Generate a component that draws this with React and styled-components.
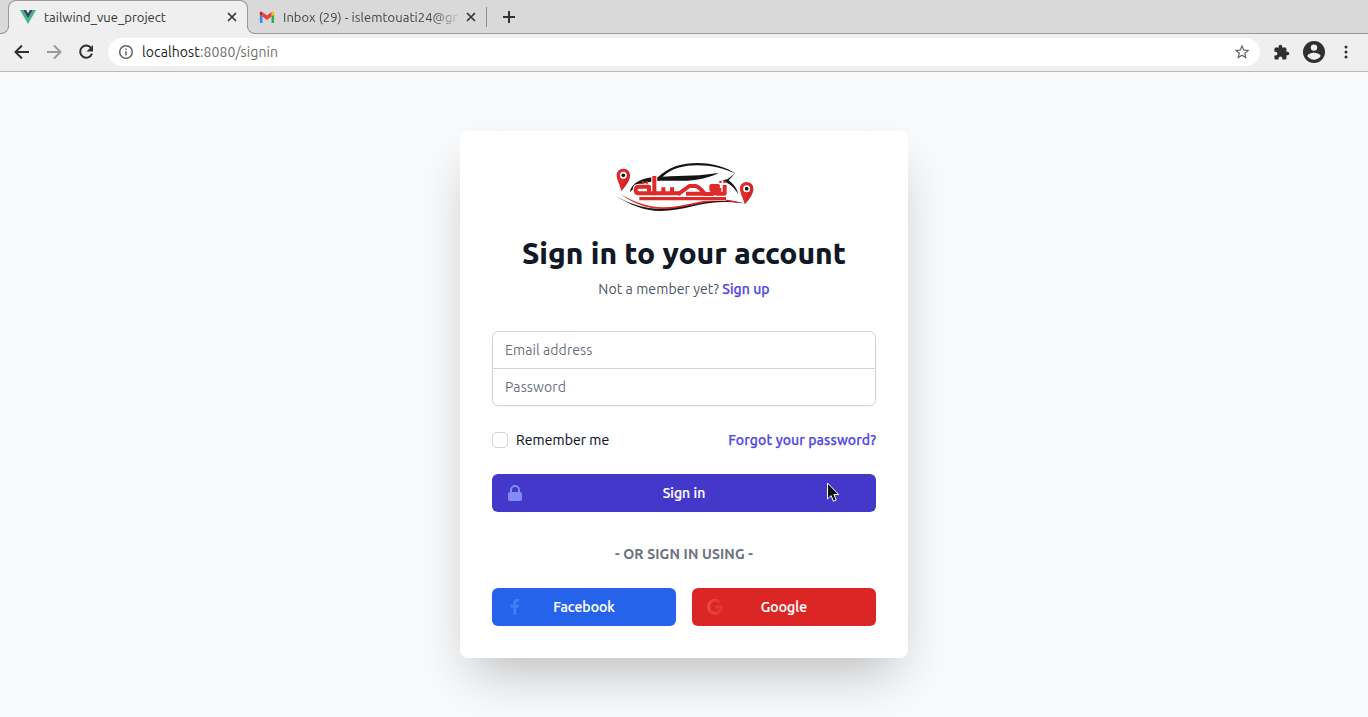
import React from "react";
import styled, { createGlobalStyle } from "styled-components";

const GlobalStyle = createGlobalStyle`
  *, *::before, *::after { box-sizing: border-box; }
  html, body { margin: 0; height: 100%; }
  body {
    font-family: Ubuntu, "Noto Sans", sans-serif;
    font-size: 14px;
    line-height: 20px;
    color: #111827;
    background: #f9fafb;
    overflow: hidden;
  }
  button, input { font: inherit; letter-spacing: inherit; margin: 0; }
  svg { display: block; flex: none; }
`;

const Window = styled.div`
  height: 717px;
  display: flex;
  flex-direction: column;
`;

const TabStrip = styled.div`
  height: 34px;
  flex: none;
  display: flex;
  background: #d9d9d9;
  border-bottom: 1px solid #999;
  padding-left: 8px;
`;

const Tab = styled.div`
  position: relative;
  display: flex;
  align-items: center;
  width: 240px;
  height: 34px;
  padding: ${(p) => (p.$active ? "0 7px 2px 11px" : "0 9px 0 11px")};
  font-size: 13px;
  color: ${(p) => (p.$active ? "#333" : "#444")};
  ${(p) =>
    p.$active &&
    `
    background: #efefef;
    border: 1px solid #999;
    border-bottom: 0;
    border-radius: 8px 8px 0 0;
    &::before, &::after {
      content: "";
      position: absolute;
      z-index: 1;
      bottom: 0;
      width: 9px;
      height: 9px;
      border-bottom: 1px solid #999;
      background: #d9d9d9;
    }
    &::before {
      left: -9px;
      border-right: 1px solid #999;
      border-bottom-right-radius: 8px;
    }
    &::after {
      right: -9px;
      border-left: 1px solid #999;
      border-bottom-left-radius: 8px;
    }
  `}
`;

const CornerFill = styled.span`
  position: absolute;
  bottom: 0;
  ${(p) => p.$side}: -6px;
  width: 8px;
  height: 6px;
  background: #efefef;
`;

const TabTitle = styled.span`
  flex: 1;
  min-width: 0;
  margin: 0 6px 0 8px;
  white-space: nowrap;
  letter-spacing: ${(p) => p.$track || 0}px;
  ${(p) => p.$fade && "mask-image: linear-gradient(to right, #000 84%, rgba(0, 0, 0, 0.2) 100%);"}
`;

const TabDivider = styled.div`
  width: 1px;
  height: 20px;
  margin: 7px 16px 0 -2px;
  background: #8c8c8c;
`;

const NewTab = styled.div`
  padding-top: 11px;
`;

const Toolbar = styled.div`
  height: 38px;
  flex: none;
  display: flex;
  align-items: center;
  padding: 0 14px 1px 13px;
  background: #efefef;
  border-bottom: 1px solid #b8b8b8;
`;

const NavButtons = styled.div`
  display: flex;
  gap: 14px;
  margin-right: 13px;
`;

const AddressBar = styled.div`
  flex: 1;
  height: 28px;
  display: flex;
  align-items: center;
  padding: 0 9px 0 10px;
  border-radius: 14px;
  background: #fff;
`;

const Url = styled.span`
  flex: 1;
  margin-left: 8px;
  color: #6c6c6c;
  letter-spacing: ${(p) => p.$track}px;
  b { font-weight: 400; color: #222; }
`;

const ToolbarActions = styled.div`
  display: flex;
  align-items: center;
  margin-left: 13px;
  gap: 13px;
`;

const Page = styled.main`
  position: relative;
  flex: 1;
  display: flex;
  justify-content: center;
  align-items: flex-start;
  padding-top: 59px;
`;

const Card = styled.section`
  width: 448px;
  height: 527px;
  padding: 32px;
  display: flex;
  flex-direction: column;
  background: #fff;
  border-radius: 8px;
  box-shadow: 0 25px 50px -12px rgba(0, 0, 0, 0.25);
`;

const LogoRow = styled.div`
  display: flex;
  justify-content: center;
`;

const Title = styled.h1`
  margin: 24px 0 0;
  font-size: 30px;
  line-height: 36px;
  font-weight: 800;
  text-align: center;
  white-space: nowrap;
`;

const Subtitle = styled.p`
  margin: 8px 0 0;
  text-align: center;
  color: #4b5563;
  letter-spacing: ${(p) => p.$track}px;
`;

const Link = styled.a`
  color: #4f46e5;
  font-weight: 500;
  -webkit-text-stroke: 0.25px currentColor;
  letter-spacing: ${(p) => p.$track}px;
`;

const Fields = styled.div`
  margin-top: 32px;
  border-radius: 6px;
  box-shadow: 0 1px 2px rgba(0, 0, 0, 0.05);
`;

const Field = styled.input`
  display: block;
  width: 100%;
  height: 38px;
  padding: 8px 12px;
  border: 1px solid #d1d5db;
  border-radius: ${(p) => (p.$last ? "0 0 6px 6px" : "6px 6px 0 0")};
  margin-top: ${(p) => (p.$last ? "-1px" : "0")};
  background: #fff;
  outline: 0;
  letter-spacing: ${(p) => p.$track}px;
  &::placeholder { color: #6b7280; opacity: 1; }
`;

const Options = styled.div`
  display: flex;
  align-items: center;
  justify-content: space-between;
  height: 20px;
  margin-top: 24px;
`;

const Remember = styled.label`
  display: flex;
  align-items: center;
  gap: 8px;
  -webkit-text-stroke: 0.15px currentColor;
  letter-spacing: ${(p) => p.$track}px;
`;

const Checkbox = styled.input`
  appearance: none;
  width: 16px;
  height: 16px;
  border: 1px solid #d1d5db;
  border-radius: 4px;
  background: #fff;
`;

const Button = styled.button`
  position: relative;
  flex: 1;
  height: 38px;
  border: 0;
  border-radius: 6px;
  color: #fff;
  font-weight: 500;
  -webkit-text-stroke: 0.2px currentColor;
  background: ${(p) => p.$color};
  letter-spacing: 0.05px;
`;

const ButtonIcon = styled.span`
  position: absolute;
  left: 13px;
  top: 9px;
  color: ${(p) => p.$color};
`;

const SubmitRow = styled.div`
  display: flex;
  margin-top: 24px;
`;

const Divider = styled.p`
  margin: 32px 0 24px;
  text-align: center;
  font-weight: 700;
  color: #6b7280;
  letter-spacing: ${(p) => p.$track}px;
`;

const Socials = styled.div`
  display: flex;
  gap: 16px;
`;

const Pointer = styled.svg`
  position: absolute;
  left: 826px;
  top: 410px;
`;

const CloseIcon = () => (
  <svg width="16" height="16" viewBox="0 0 16 16" stroke="#333" strokeWidth="1.7">
    <path d="M4 4l8 8M12 4l-8 8" />
  </svg>
);

const VueIcon = () => (
  <svg width="16" height="16" viewBox="0 0 16 16">
    <path d="M0 1h3.2L8 9.4 12.8 1H16L8 15z" fill="#41b883" />
    <path d="M3.2 1h3L8 4.2 9.8 1h3L8 9.4z" fill="#35495e" />
  </svg>
);

const GmailIcon = () => (
  <svg width="16" height="16" viewBox="0 0 16 16">
    <path d="M1 14h2.5V7.6L.8 5.5v7.3c0 .8.3 1.2 1 1.2z" fill="#4285f4" />
    <path d="M12.5 14H14c.7 0 1.1-.5 1.1-1.2V5.5l-2.6 2.1z" fill="#34a853" />
    <path d="M12.5 3.1v4.5l2.6-2V4.1c0-1.6-1.7-2-2.6-1z" fill="#fbbc04" />
    <path d="M3.4 7.6V3.1L8 6.6l4.5-3.5v4.5L8 11z" fill="#ea4335" />
    <path d="M.8 4.1v1.5l2.6 2V3.1C2.5 2.1.8 2.5.8 4.1z" fill="#c5221f" />
  </svg>
);

const ArrowIcon = ({ color, flip }) => (
  <svg width="18" height="18" viewBox="0 0 18 18" fill="none" stroke={color} strokeWidth="2">
    <path d={flip ? "M2 9h13M9 2.5l6.5 6.5L9 15.5" : "M16 9H3M9 2.5L2.5 9 9 15.5"} />
  </svg>
);

const ReloadIcon = () => (
  <svg width="18" height="18" viewBox="0 0 18 18">
    <path d="M14.3 5.2A6.1 6.1 0 1 0 15 10.7" fill="none" stroke="#303030" strokeWidth="2" />
    <path d="M16 2v6.5H9.5z" fill="#303030" />
  </svg>
);

const InfoIcon = () => (
  <svg width="16" height="16" viewBox="0 0 16 16" fill="none" stroke="#5f6368" strokeWidth="1.5">
    <circle cx="8" cy="8" r="6.3" />
    <path d="M8 7.2v4.2M8 4.5v1.6" />
  </svg>
);

const StarIcon = () => (
  <svg width="18" height="18" viewBox="0 0 24 24" fill="#5f6368">
    <path d="M22 9.24l-7.19-.62L12 2 9.19 8.63 2 9.24l5.46 4.73L5.82 21 12 17.27 18.18 21l-1.63-7.03L22 9.24zM12 15.4l-3.76 2.27 1-4.28-3.32-2.88 4.38-.38L12 6.1l1.71 4.04 4.38.38-3.32 2.88 1 4.28L12 15.4z" />
  </svg>
);

const PuzzleIcon = () => (
  <svg width="17" height="17" viewBox="0 0 24 24" fill="#303030">
    <path d="M20.5 11H19V7a2 2 0 0 0-2-2h-4V3.5a2.5 2.5 0 0 0-5 0V5H4a2 2 0 0 0-2 2v3.8h1.5a2.7 2.7 0 0 1 0 5.4H2V20a2 2 0 0 0 2 2h3.8v-1.5a2.7 2.7 0 0 1 5.4 0V22H17a2 2 0 0 0 2-2v-4h1.5a2.5 2.5 0 0 0 0-5z" />
  </svg>
);

const ProfileIcon = () => (
  <svg width="22" height="22" viewBox="0 0 22 22">
    <circle cx="11" cy="11" r="11" fill="#303030" />
    <circle cx="11" cy="6.6" r="3.2" fill="#efefef" />
    <path d="M4.4 15.2c0-2.2 4.4-3.4 6.6-3.4s6.6 1.2 6.6 3.4a8 8 0 0 1-13.2 0z" fill="#efefef" />
  </svg>
);

const MenuIcon = () => (
  <svg width="16" height="16" viewBox="0 0 16 16" fill="#303030">
    <circle cx="8" cy="3" r="1.5" />
    <circle cx="8" cy="8" r="1.5" />
    <circle cx="8" cy="13" r="1.5" />
  </svg>
);

const LockIcon = () => (
  <svg width="20" height="20" viewBox="0 0 20 20" fill="currentColor">
    <path fillRule="evenodd" clipRule="evenodd" d="M5 9V7a5 5 0 0110 0v2a2 2 0 012 2v5a2 2 0 01-2 2H5a2 2 0 01-2-2v-5a2 2 0 012-2zm8-2v2H7V7a3 3 0 016 0z" />
  </svg>
);

const FacebookIcon = () => (
  <svg width="20" height="20" viewBox="0 0 20 20" fill="currentColor">
    <path d="M8.4 18v-7.3H5.6V7.6h2.8V5.7C8.4 3.2 9.9 2 12 2c1 0 1.9.1 2.1.1v2.7h-1.5c-1.1 0-1.4.6-1.4 1.4v1.4H14l-.4 3.1h-2.4V18z" />
  </svg>
);

const GoogleIcon = () => (
  <svg width="20" height="20" viewBox="0 0 20 20" fill="none" strokeWidth="3">
    <defs>
      <linearGradient id="g-fade">
        <stop offset="0" stopColor="#ef4444" />
        <stop offset="1" stopColor="#e23434" />
      </linearGradient>
    </defs>
    <path d="M14.6 5.2A6.5 6.5 0 1 0 16.5 10H10.5" stroke="url(#g-fade)" />
  </svg>
);

const MapPin = ({ x, y }) => (
  <g transform={`translate(${x} ${y})`}>
    <path d="M0 0C-13 0-20 9-20 20c0 14 10 29 14 47C6 55 20 36 20 20 20 9 12 0 0 0z" fill="#e02a2a" />
    <path d="M7 2c8 3 13 9 13 18 0 16-14 35-26 47C-1 47 7 35 7 2z" fill="#b81920" opacity=".4" />
    <circle cx="0" cy="20" r="10.5" fill="#fff" />
    <circle cx="0" cy="20" r="5.5" fill="#181818" />
  </g>
);

const Lettering = () => (
  <>
    <path d="M151 78v52h-47q-9 0-9-10t10-10h30v14" />
    <path d="M148 130h78M178 130v-18M204 130v-18" />
    <path d="M222 133l34-25h20q14 6 26 23h-56" />
    <path d="M298 132h26q18-4 18-24h-20v12h30M336 131h26v-26" />
  </>
);

const BrandLogo = () => (
  <svg width="140" height="48" viewBox="30 39 420 144">
    <path d="M162 81C195 50 235 39 280 39c48 0 86 12 116 33-35-17-72-26-116-26-42 0-76 9-104 34 62-4 118-2 169-12-55 28-112 25-174 24-42 2-70 10-94 35 6-30 40-46 85-46z" fill="#151515" />
    <path d="M394 70l-20 21c12 9 24 21 29 42-9-16-20-27-33-34l-14-8 14-3z" fill="#151515" />
    <path d="M34 138c55 28 88 38 133 38 65 0 119-25 184-25 26 0 48 4 68 9-22-3-43-4-64-4-67 0-117 27-185 27-52 0-92-20-136-45z" fill="#151515" />
    <path d="M50 133c40 23 81 38 124 39 65 1 116-24 177-24 23 0 44 7 65 12-22-1-42-7-66-7-59 0-111 24-175 24-50 0-91-20-125-44z" fill="#df2525" />
    <g fill="none" stroke="#fff" strokeWidth="18" strokeLinejoin="round">
      <Lettering />
      <path d="M106 146h260" strokeWidth="13" />
    </g>
    <g fill="none" stroke="#df2a2a" strokeWidth="12" strokeLinejoin="round">
      <Lettering />
      <path d="M106 146h260" strokeWidth="10" />
    </g>
    <path d="M114 94h7v7h-7zM125 94h7v7h-7zM346 92h7v7h-7zM358 92h7v7h-7z" fill="#df2a2a" />
    <MapPin x={58} y={56} />
    <MapPin x={428} y={96} />
  </svg>
);

export default function App() {
  return (
    <Window>
      <GlobalStyle />
      <TabStrip>
        <Tab $active>
          <CornerFill $side="left" />
          <CornerFill $side="right" />
          <VueIcon />
          <TabTitle>tailwind_vue_project</TabTitle>
          <CloseIcon />
        </Tab>
        <Tab>
          <GmailIcon />
          <TabTitle $fade $track={0.05}>Inbox (29) - islemtouati24@gm</TabTitle>
          <CloseIcon />
        </Tab>
        <TabDivider />
        <NewTab>
          <svg width="12" height="12" viewBox="0 0 12 12" stroke="#333" strokeWidth="2">
            <path d="M0 6h12M6 0v12" />
          </svg>
        </NewTab>
      </TabStrip>
      <Toolbar>
        <NavButtons>
          <ArrowIcon color="#303030" />
          <ArrowIcon color="#9b9b9b" flip />
          <ReloadIcon />
        </NavButtons>
        <AddressBar>
          <InfoIcon />
          <Url $track={0.1}><b>localhost</b>:8080/signin</Url>
          <StarIcon />
        </AddressBar>
        <ToolbarActions>
          <PuzzleIcon />
          <ProfileIcon />
          <MenuIcon />
        </ToolbarActions>
      </Toolbar>
      <Page>
        <Card>
          <LogoRow><BrandLogo /></LogoRow>
          <Title>Sign in to your account</Title>
          <Subtitle $track={0.1}>
            Not a member yet? <Link $track={0.05}>Sign up</Link>
          </Subtitle>
          <Fields>
            <Field $track={0.1} placeholder="Email address" />
            <Field $last $track={0.1} type="password" placeholder="Password" />
          </Fields>
          <Options>
            <Remember $track={0.07}><Checkbox type="checkbox" />Remember me</Remember>
            <Link $track={0.1}>Forgot your password?</Link>
          </Options>
          <SubmitRow>
            <Button $color="#4338ca">
              <ButtonIcon $color="#818cf8"><LockIcon /></ButtonIcon>
              Sign in
            </Button>
          </SubmitRow>
          <Divider $track={0.15}>- OR SIGN IN USING -</Divider>
          <Socials>
            <Button $color="#2563eb">
              <ButtonIcon $color="#3b82f6"><FacebookIcon /></ButtonIcon>
              Facebook
            </Button>
            <Button $color="#dc2626">
              <ButtonIcon $color="#ef4444"><GoogleIcon /></ButtonIcon>
              Google
            </Button>
          </Socials>
        </Card>
        <Pointer width="14" height="21" viewBox="0 0 14 21">
          <path d="M1.5 1v16l3.6-3.4 2.3 5.6 2.9-1.2-2.4-5.5h4.8z" fill="#111" stroke="#fff" strokeWidth="1" />
        </Pointer>
      </Page>
    </Window>
  );
}
